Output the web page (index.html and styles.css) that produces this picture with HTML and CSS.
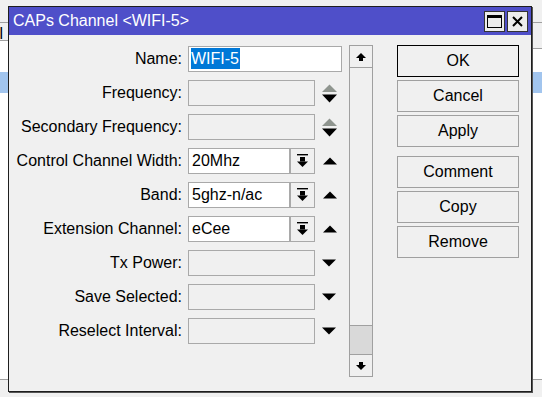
FILE: index.html
```html
<!DOCTYPE html>
<html>
<head>
<meta charset="utf-8">
<link rel="stylesheet" href="styles.css">
</head>
<body>
<div class="desktop">
  <div class="backwin">
    <div class="bcol">
      <div class="bhead short"><span class="bhead-text">Channel</span></div>
      <div class="blist"><div class="brow sel left-sel"></div></div>
    </div>
    <div class="bcol">
      <div class="bhead tall"></div>
      <div class="blist"><div class="brow sel right-sel"></div></div>
    </div>
  </div>

  <div class="dialog">
    <div class="titlebar">
      <span class="title">CAPs Channel &lt;WIFI-5&gt;</span>
      <div class="tbtns">
        <div class="tbtn">
          <svg width="15" height="13" viewBox="0 0 15 13"><rect x="0.5" y="0.5" width="14" height="12" fill="none" stroke="#000" stroke-width="1"/><rect x="0" y="0" width="15" height="3" fill="#000"/></svg>
        </div>
        <div class="tbtn">
          <svg width="11" height="11" viewBox="0 0 11 11"><path d="M1 1 L10 10 M10 1 L1 10" stroke="#000" stroke-width="2" fill="none"/></svg>
        </div>
      </div>
    </div>

    <div class="dbody">
      <div class="form">
        <div class="label">Name:</div>
        <div class="field"><div class="input white wide"><span class="selected">WIFI-5</span></div></div>

        <div class="label">Frequency:</div>
        <div class="field"><div class="input mid"></div>
          <svg class="spin" width="15" height="19" viewBox="0 0 15 19"><polygon points="0,8 15,8 7.5,0.5" fill="#8f958f"/><polygon points="0,10.5 15,10.5 7.5,18.5" fill="#000"/></svg>
        </div>

        <div class="label">Secondary Frequency:</div>
        <div class="field"><div class="input mid"></div>
          <svg class="spin" width="15" height="19" viewBox="0 0 15 19"><polygon points="0,8 15,8 7.5,0.5" fill="#8f958f"/><polygon points="0,10.5 15,10.5 7.5,18.5" fill="#000"/></svg>
        </div>

        <div class="label">Control Channel Width:</div>
        <div class="field"><div class="input white short">20Mhz</div>
          <div class="combo-btn"><svg width="11" height="14" viewBox="0 0 11 14"><rect x="0" y="0" width="11" height="1.4" fill="#000"/><rect x="3" y="3" width="5" height="4.5" fill="#000"/><polygon points="0,7.5 11,7.5 5.5,13" fill="#000"/></svg></div>
          <svg class="tri" width="14" height="8" viewBox="0 0 14 8"><polygon points="0,7.5 14,7.5 7,0.5" fill="#000"/></svg>
        </div>

        <div class="label">Band:</div>
        <div class="field"><div class="input white short">5ghz-n/ac</div>
          <div class="combo-btn"><svg width="11" height="14" viewBox="0 0 11 14"><rect x="0" y="0" width="11" height="1.4" fill="#000"/><rect x="3" y="3" width="5" height="4.5" fill="#000"/><polygon points="0,7.5 11,7.5 5.5,13" fill="#000"/></svg></div>
          <svg class="tri" width="14" height="8" viewBox="0 0 14 8"><polygon points="0,7.5 14,7.5 7,0.5" fill="#000"/></svg>
        </div>

        <div class="label">Extension Channel:</div>
        <div class="field"><div class="input white short">eCee</div>
          <div class="combo-btn"><svg width="11" height="14" viewBox="0 0 11 14"><rect x="0" y="0" width="11" height="1.4" fill="#000"/><rect x="3" y="3" width="5" height="4.5" fill="#000"/><polygon points="0,7.5 11,7.5 5.5,13" fill="#000"/></svg></div>
          <svg class="tri" width="14" height="8" viewBox="0 0 14 8"><polygon points="0,7.5 14,7.5 7,0.5" fill="#000"/></svg>
        </div>

        <div class="label">Tx Power:</div>
        <div class="field"><div class="input mid"></div>
          <svg class="tri down" width="14" height="8" viewBox="0 0 14 8"><polygon points="0,0.5 14,0.5 7,7.5" fill="#000"/></svg>
        </div>

        <div class="label">Save Selected:</div>
        <div class="field"><div class="input mid"></div>
          <svg class="tri down" width="14" height="8" viewBox="0 0 14 8"><polygon points="0,0.5 14,0.5 7,7.5" fill="#000"/></svg>
        </div>

        <div class="label">Reselect Interval:</div>
        <div class="field"><div class="input mid"></div>
          <svg class="tri down" width="14" height="8" viewBox="0 0 14 8"><polygon points="0,0.5 14,0.5 7,7.5" fill="#000"/></svg>
        </div>
      </div>

      <div class="scrollbar">
        <div class="sb-btn"><svg width="10" height="8" viewBox="0 0 10 8"><polygon points="0,5 10,5 5,0" fill="#000"/><rect x="3" y="5" width="4" height="3" fill="#000"/></svg></div>
        <div class="sb-track"></div>
        <div class="sb-thumb"></div>
        <div class="sb-btn"><svg width="10" height="8" viewBox="0 0 10 8"><rect x="3" y="0" width="4" height="3" fill="#000"/><polygon points="0,3 10,3 5,8" fill="#000"/></svg></div>
      </div>

      <div class="actions">
        <div class="btn default">OK</div>
        <div class="btn">Cancel</div>
        <div class="btn">Apply</div>
        <div class="btn group">Comment</div>
        <div class="btn">Copy</div>
        <div class="btn">Remove</div>
      </div>
    </div>
  </div>
</div>
</body>
</html>
```

FILE: styles.css
```css
html, body {
  margin: 0;
  padding: 0;
  background: #f0f0f0;
  font-family: "Liberation Sans", Arial, sans-serif;
  font-size: 16px;
  color: #000;
}

.desktop {
  position: relative;
  width: 542px;
  height: 397px;
  overflow: hidden;
  background: #f0f0f0;
}

/* background window behind the dialog */
.backwin {
  position: absolute;
  left: 0;
  right: 0;
  top: 22px;
  height: 358px;
  box-sizing: border-box;
  border-top: 1px solid #a0a0a0;
  border-bottom: 1px solid #a0a0a0;
  display: grid;
  grid-template-columns: 1fr 1fr;
}

.bcol {
  display: flex;
  flex-direction: column;
}

.bhead {
  box-sizing: border-box;
  border-bottom: 1px solid #a0a0a0;
  background: #f0f0f0;
  overflow: hidden;
  position: relative;
}

.bhead.short { height: 18px; }
.bhead.tall { height: 26px; }

.bhead-text {
  display: block;
  width: 3px;
  overflow: hidden;
  direction: rtl;
  white-space: nowrap;
  line-height: 18px;
  padding-top: 2px;
}

.blist {
  flex: 1;
  background: #fff;
}

.brow.sel {
  height: 21px;
  background: #a2c5ee;
}

.left-sel { margin-top: 31px; }
.right-sel { margin-top: 23px; }

/* dialog window */
.dialog {
  position: absolute;
  left: 8px;
  top: 6px;
  width: 524px;
  height: 386px;
  box-sizing: border-box;
  border: 1px solid #1e1e1e;
  box-shadow: 1px 1px 0 #555;
  background: #f0f0f0;
  display: flex;
  flex-direction: column;
}

.titlebar {
  height: 28px;
  background: #4f4fc9;
  display: flex;
  align-items: center;
  justify-content: space-between;
  padding: 0 3px 0 4px;
}

.title {
  color: #fff;
  font-size: 16px;
  line-height: 18px;
  white-space: nowrap;
}

.tbtns {
  display: flex;
  gap: 2px;
}

.tbtn {
  width: 21px;
  height: 21px;
  box-sizing: border-box;
  border: 1px solid #333;
  background: #ececec;
  display: flex;
  align-items: center;
  justify-content: center;
}

.dbody {
  flex: 1;
  display: flex;
  align-items: flex-start;
  padding: 10px 0 0 0;
}

.form {
  margin-top: 1px;
  display: grid;
  grid-template-columns: 173px 154px;
  column-gap: 6px;
  row-gap: 8px;
  grid-auto-rows: 26px;
}

.label {
  text-align: right;
  line-height: 26px;
  white-space: nowrap;
}

.field {
  display: flex;
  align-items: center;
}

.input {
  height: 26px;
  box-sizing: border-box;
  border: 1px solid #a9a9a9;
  background: #f0f0f0;
  line-height: 24px;
  padding-left: 3px;
  white-space: nowrap;
  overflow: hidden;
}

.input.white { background: #fff; }
.input.wide { width: 154px; padding-left: 2px; }
.input.mid { width: 127px; }
.input.short { width: 102px; }

.selected {
  display: inline-block;
  background: #0078d7;
  color: #fff;
  height: 21px;
  line-height: 21px;
  vertical-align: top;
  margin-top: 1px;
  padding-right: 1px;
}

.combo-btn {
  width: 25px;
  height: 26px;
  box-sizing: border-box;
  border: 1px solid #a9a9a9;
  background: #f0f0f0;
  display: flex;
  align-items: center;
  justify-content: center;
}

.spin {
  margin-left: 7px;
  display: block;
}

.tri {
  margin-left: 8px;
  display: block;
}

.tri.down {
  margin-left: 7px;
}

/* scrollbar */
.scrollbar {
  margin-left: 7px;
  width: 24px;
  height: 332px;
  display: flex;
  flex-direction: column;
}

.sb-btn {
  height: 23px;
  box-sizing: border-box;
  border: 1px solid #a0a0a0;
  background: #f0f0f0;
  display: flex;
  align-items: center;
  justify-content: center;
}

.sb-track {
  flex: 1;
  border-left: 1px solid #a0a0a0;
  border-right: 1px solid #a0a0a0;
  background: #f0f0f0;
}

.sb-thumb {
  height: 29px;
  box-sizing: border-box;
  border: 1px solid #a0a0a0;
  border-bottom: none;
  background: #d9d9d9;
}

/* action buttons */
.actions {
  margin-left: 24px;
  width: 122px;
  display: flex;
  flex-direction: column;
  gap: 3px;
}

.btn {
  height: 32px;
  box-sizing: border-box;
  border: 1px solid #a0a0a0;
  background: #f0f0f0;
  text-align: center;
  line-height: 30px;
}

.btn.default {
  border-color: #000;
}

.btn.group {
  margin-top: 6px;
}
```
